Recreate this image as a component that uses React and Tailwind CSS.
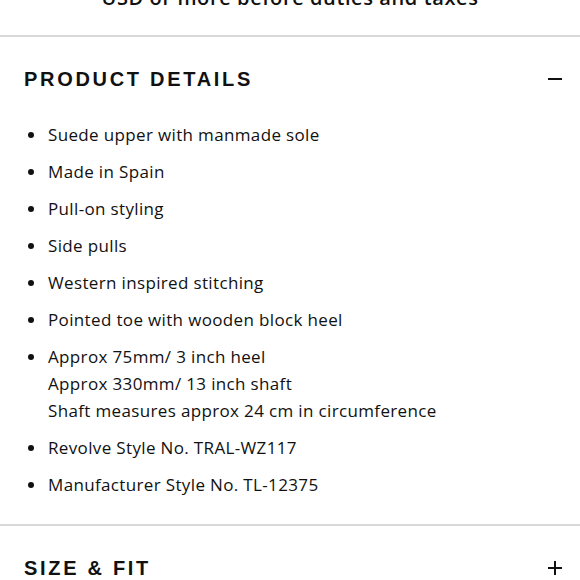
export default function App() {
  const items = [
    ["Suede upper with manmade sole"],
    ["Made in Spain"],
    ["Pull-on styling"],
    ["Side pulls"],
    ["Western inspired stitching"],
    ["Pointed toe with wooden block heel"],
    ["Approx 75mm/ 3 inch heel", "Approx 330mm/ 13 inch shaft", "Shaft measures approx 24 cm in circumference"],
    ["Revolve Style No. TRAL-WZ117"],
    ["Manufacturer Style No. TL-12375"],
  ];
  return (
    <div className="w-[580px] h-[580px] overflow-hidden bg-white text-[#111]">
      <div className="h-[35px] relative overflow-hidden">
        <div className="absolute left-0 right-0 top-[-16px] text-center text-[20px] leading-[28px] tracking-[0.6px] font-semibold" style={{ fontFamily: '"Open Sans", sans-serif' }}>
          USD or more before duties and taxes
        </div>
      </div>
      <div className="border-t-2 border-[#d8d8d8]">
        <div className="flex items-center justify-between pl-[24px] pr-[18px] h-[84px]">
          <div className="text-[20px] font-bold tracking-[2.7px]" style={{ fontFamily: '"Liberation Sans", Arial, sans-serif' }}>PRODUCT DETAILS</div>
          <div className="w-[14px] h-[2px] bg-[#111]" />
        </div>
        <ul className="flex flex-col gap-[10px] pl-[28px] pb-[26px] text-[17px] leading-[27px] tracking-[0.35px]" style={{ fontFamily: '"Open Sans", sans-serif' }}>
          {items.map((lines, i) => (
            <li key={i} className="flex">
              <div className="w-[20px] h-[27px] flex items-center shrink-0">
                <div className="w-[6px] h-[6px] rounded-full bg-[#111]" />
              </div>
              <div className="flex flex-col">
                {lines.map((l, j) => (
                  <span key={j}>{l}</span>
                ))}
              </div>
            </li>
          ))}
        </ul>
      </div>
      <div className="border-t-2 border-[#d8d8d8]">
        <div className="flex items-center justify-between pl-[24px] pr-[18px] h-[84px]">
          <div className="text-[20px] font-bold tracking-[2.7px]" style={{ fontFamily: '"Liberation Sans", Arial, sans-serif' }}>SIZE &amp; FIT</div>
          <div className="relative w-[14px] h-[14px]">
            <div className="absolute left-0 top-[6px] w-[14px] h-[2px] bg-[#111]" />
            <div className="absolute top-0 left-[6px] w-[2px] h-[14px] bg-[#111]" />
          </div>
        </div>
      </div>
    </div>
  );
}
